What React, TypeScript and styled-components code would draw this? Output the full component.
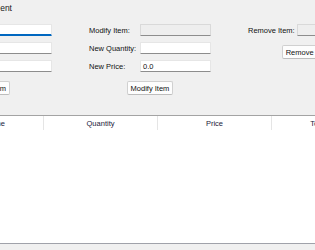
import React from "react";
import styled, { createGlobalStyle } from "styled-components";

const Global = createGlobalStyle`
  html, body { margin: 0; padding: 0; background: #f0f0f0; overflow: hidden; }
  body { font-family: "Liberation Sans", Arial, sans-serif; font-size: 7.5px; color: #000; }
`;

const Window = styled.div`
  width: 315px;
  height: 250px;
  display: flex;
  flex-direction: column;
  background: #f0f0f0;
  overflow: hidden;
`;

const TitleBar = styled.div`
  height: 15px;
  display: flex;
  align-items: center;
`;

const TitleText = styled.div`
  margin-left: -200px;
  width: 212px;
  text-align: right;
  font-size: 8.5px;
  color: #1a1a1a;
  white-space: nowrap;
`;

const Form = styled.div`
  display: flex;
  align-items: flex-start;
  gap: 37px;
  margin-left: -70px;
  margin-top: 9px;
`;

const Group = styled.div<{ $labelW: number }>`
  display: grid;
  grid-template-columns: ${(p) => p.$labelW}px 71px;
  grid-auto-rows: auto;
  row-gap: 6px;
  flex: none;
`;

const Label = styled.div`
  display: flex;
  align-items: center;
  height: 12px;
  white-space: nowrap;
  color: #111;
`;

const Entry = styled.div<{ $focused?: boolean; $disabled?: boolean }>`
  box-sizing: border-box;
  height: 12px;
  background: ${(p) => (p.$disabled ? "#eeeeee" : "#ffffff")};
  border: 1px solid ${(p) => (p.$disabled ? "#d9d9d9" : "#e6e6e6")};
  border-bottom: ${(p) => (p.$focused ? "2px solid #0067c0" : "1px solid #8d8d8d")};
  border-radius: 1px;
  padding-left: 2px;
  display: flex;
  align-items: center;
  color: #111;
`;

const ButtonCell = styled.div<{ $gap: number }>`
  grid-column: 1 / span 2;
  display: flex;
  justify-content: center;
  margin-top: ${(p) => p.$gap}px;
  height: 14px;
`;

const Button = styled.div`
  box-sizing: border-box;
  height: 14px;
  padding: 0 2.5px;
  background: #fdfdfd;
  border: 1px solid #d0d0d0;
  border-bottom-color: #bdbdbd;
  border-radius: 2px;
  display: flex;
  align-items: center;
  white-space: nowrap;
  color: #111;
`;

const Table = styled.div`
  margin-top: 20px;
  margin-left: -70px;
  flex: 1;
  background: #ffffff;
  border-top: 1px solid #a3a3a3;
  border-bottom: 1px solid #a0a2aa;
  display: flex;
  flex-direction: column;
`;

const HeaderRow = styled.div`
  display: grid;
  grid-template-columns: repeat(4, 114px);
  height: 14px;
`;

const HeaderCell = styled.div`
  display: flex;
  align-items: center;
  justify-content: center;
  border-right: 1px solid #e5e5e5;
  color: #1a1a3a;
  white-space: nowrap;
`;

const BottomStrip = styled.div`
  height: 6px;
  background: #f0f0f0;
`;

export default function App() {
  return (
    <Window>
      <Global />
      <TitleBar>
        <TitleText>Inventory Management</TitleText>
      </TitleBar>
      <Form>
        <Group $labelW={51}>
          <Label>Item Name:</Label>
          <Entry $focused />
          <Label>Quantity:</Label>
          <Entry />
          <Label>Price:</Label>
          <Entry />
          <ButtonCell $gap={3}>
            <Button>Add Item</Button>
          </ButtonCell>
        </Group>
        <Group $labelW={51}>
          <Label>Modify Item:</Label>
          <Entry $disabled />
          <Label>New Quantity:</Label>
          <Entry />
          <Label>New Price:</Label>
          <Entry>0.0</Entry>
          <ButtonCell $gap={3}>
            <Button>Modify Item</Button>
          </ButtonCell>
        </Group>
        <Group $labelW={49}>
          <Label>Remove Item:</Label>
          <Entry $disabled />
          <ButtonCell $gap={3}>
            <Button>Remove Item</Button>
          </ButtonCell>
        </Group>
      </Form>
      <Table>
        <HeaderRow>
          <HeaderCell>Item Name</HeaderCell>
          <HeaderCell>Quantity</HeaderCell>
          <HeaderCell>Price</HeaderCell>
          <HeaderCell>Total Value</HeaderCell>
        </HeaderRow>
      </Table>
      <BottomStrip />
    </Window>
  );
}
